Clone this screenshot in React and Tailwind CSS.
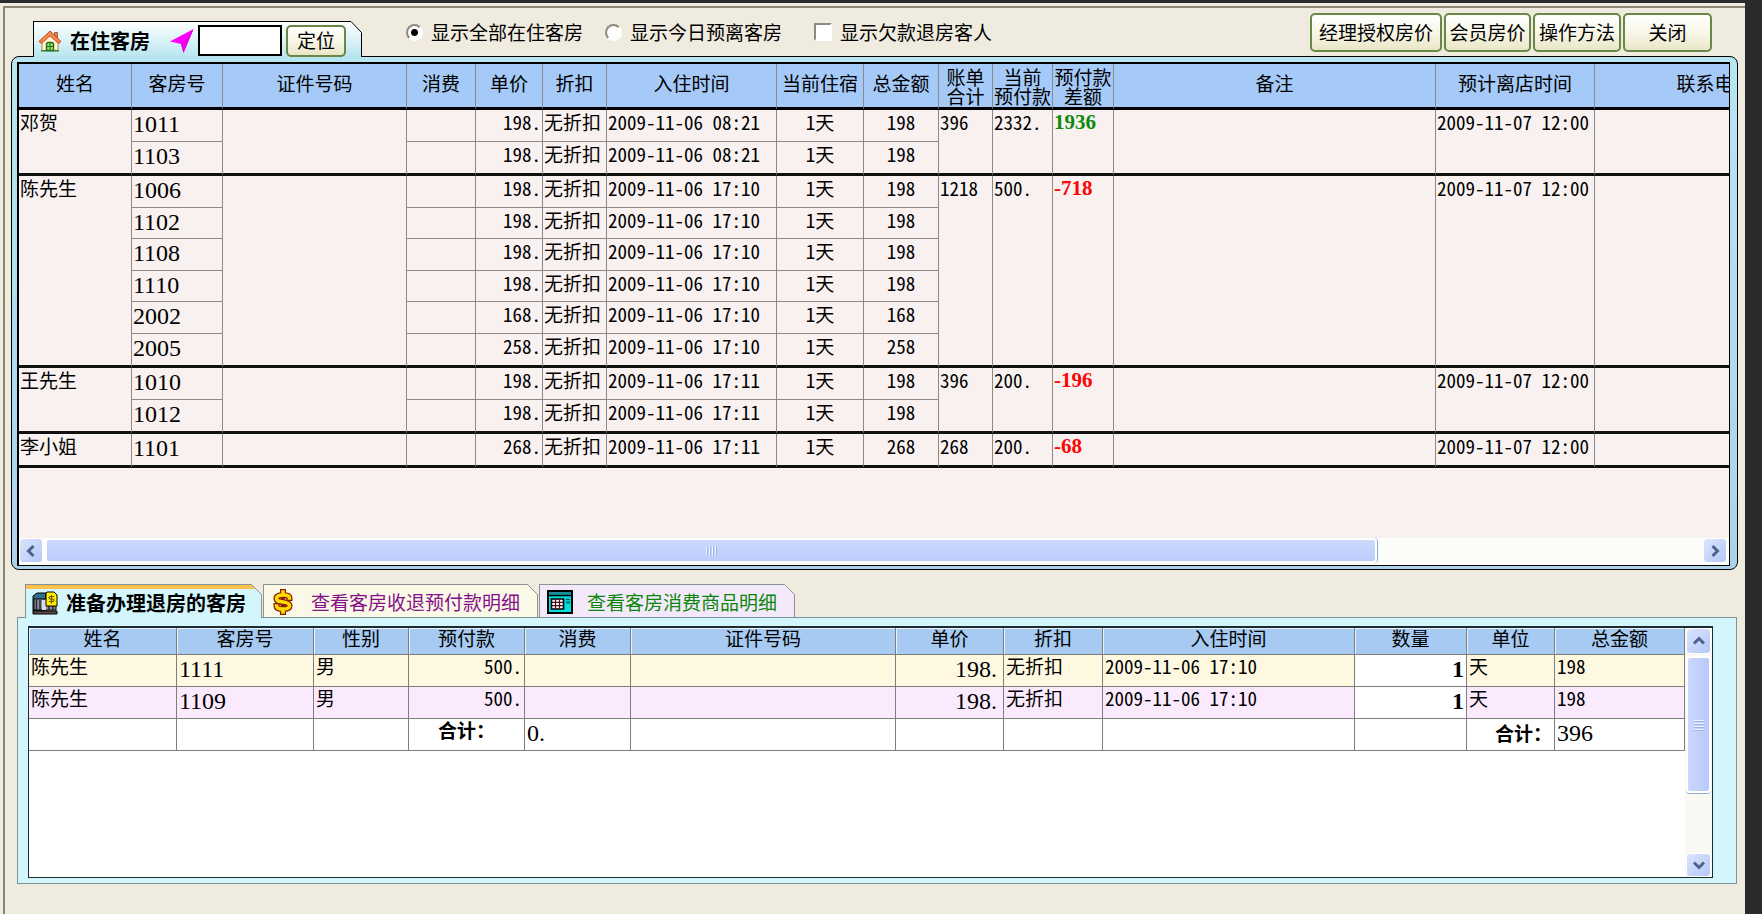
import { useState } from 'react'

const guests = [
  {
    name: '邓贺', bill: '396', paid: '2332.', diff: '1936', leave: '2009-11-07 12:00',
    rooms: [
      { no: '1011', price: '198.', time: '2009-11-06 08:21', total: '198' },
      { no: '1103', price: '198.', time: '2009-11-06 08:21', total: '198' },
    ],
  },
  {
    name: '陈先生', bill: '1218', paid: '500.', diff: '-718', leave: '2009-11-07 12:00',
    rooms: [
      { no: '1006', price: '198.', time: '2009-11-06 17:10', total: '198' },
      { no: '1102', price: '198.', time: '2009-11-06 17:10', total: '198' },
      { no: '1108', price: '198.', time: '2009-11-06 17:10', total: '198' },
      { no: '1110', price: '198.', time: '2009-11-06 17:10', total: '198' },
      { no: '2002', price: '168.', time: '2009-11-06 17:10', total: '168' },
      { no: '2005', price: '258.', time: '2009-11-06 17:10', total: '258' },
    ],
  },
  {
    name: '王先生', bill: '396', paid: '200.', diff: '-196', leave: '2009-11-07 12:00',
    rooms: [
      { no: '1010', price: '198.', time: '2009-11-06 17:11', total: '198' },
      { no: '1012', price: '198.', time: '2009-11-06 17:11', total: '198' },
    ],
  },
  {
    name: '李小姐', bill: '268', paid: '200.', diff: '-68', leave: '2009-11-07 12:00',
    rooms: [
      { no: '1101', price: '268.', time: '2009-11-06 17:11', total: '268' },
    ],
  },
]

const guestCols = [
  ['姓名', 'w-[113px]'],
  ['客房号', 'w-[91px]'],
  ['证件号码', 'w-[184px]'],
  ['消费', 'w-[69px]'],
  ['单价', 'w-[67px]'],
  ['折扣', 'w-[64px]'],
  ['入住时间', 'w-[170px]'],
  ['当前住宿', 'w-[87px]'],
  ['总金额', 'w-[75px]'],
  ['账单\n合计', 'w-[54px]'],
  ['当前\n预付款', 'w-[60px]'],
  ['预付款\n差额', 'w-[61px]'],
  ['备注', 'w-[322px]'],
  ['预计离店时间', 'w-[159px]'],
  ['联系电话', 'w-[240px]'],
]

const checkoutCols = [
  ['姓名', 'w-[148px]'],
  ['客房号', 'w-[137px]'],
  ['性别', 'w-[95px]'],
  ['预付款', 'w-[116px]'],
  ['消费', 'w-[106px]'],
  ['证件号码', 'w-[265px]'],
  ['单价', 'w-[108px]'],
  ['折扣', 'w-[99px]'],
  ['入住时间', 'w-[252px]'],
  ['数量', 'w-[112px]'],
  ['单位', 'w-[88px]'],
  ['总金额', 'w-[130px]'],
]

const checkoutRows = [
  { name: '陈先生', no: '1111', sex: '男', paid: '500.', price: '198.', off: '无折扣', time: '2009-11-06 17:10', qty: '1', unit: '天', total: '198', bg: 'bg-[#fef8e0]' },
  { name: '陈先生', no: '1109', sex: '男', paid: '500.', price: '198.', off: '无折扣', time: '2009-11-06 17:10', qty: '1', unit: '天', total: '198', bg: 'bg-[#fbeafd]' },
]

const bigNum = "font-['Liberation_Serif','Noto_Sans_CJK_SC',serif] text-2xl leading-[26px]"

/* ── ICONS ── */
function HouseIcon() {
  return (
    <svg viewBox="0 0 24 22" className="w-6 h-[22px] shrink-0">
      <path d="M4 11v9.5h16V11l-8-7z" fill="#fff3d8" stroke="#b8874c" />
      <path d="M16.5 2.5h3v5h-3z" fill="#d98a4c" stroke="#9c4a20" strokeWidth=".8" />
      <path d="M12 1 1 11.5l2.5 2L12 5.8l8.500 7.700 2.500-2z" fill="#f58a4b" stroke="#c2401c" strokeWidth="1" />
      <path d="M8.500 20.500v-6q0-2 2-2h3q2 0 2 2v6z" fill="#9be36a" stroke="#1f6b1a" strokeWidth="1.400" />
      <path d="M12 13v7M9 16.500h6" stroke="#1f6b1a" />
      <path d="M3 20.800h18" stroke="#2f7a2a" strokeWidth="1.400" />
    </svg>
  )
}

function PlaneIcon() {
  return (
    <svg viewBox="0 0 24 24" className="size-6 shrink-0">
      <path d="M23.500 0 0 12.500l11 2.500L13.500 24z" fill="#ff00ff" />
      <path d="M23.500 0 11 15 13.500 24z" fill="#e800ee" />
    </svg>
  )
}

function BuildingIcon() {
  return (
    <svg viewBox="0 0 26 24" className="w-[26px] h-6 shrink-0">
      <path d="M1 5 5 2h9v18H1z" fill="#2f6f88" stroke="#000" />
      <path d="M2 8h22v11H2z" fill="#8d8fa0" stroke="#000" />
      <path d="M4.500 9v10M8 9v10M17 14v5M21 14v5" stroke="#23242c" strokeWidth="1.400" />
      <path d="M10 9h4v10h-4z" fill="#d9dbe8" />
      <path d="M1 20h24v3H1z" fill="#5c4a48" stroke="#000" />
      <path d="M15 1h7l3 3v11H14V2z" fill="#ffee00" stroke="#000" />
      <path d="M22 5.500h-3.500q-1.500 0-1.500 1.200T18.500 8h2q1.500 0 1.500 1.300t-1.500 1.200H17M19.500 4v8.500" fill="none" stroke="#6b5a00" strokeWidth="1.200" />
    </svg>
  )
}

function DollarIcon() {
  const s = 'M17.500 9C17.500 7 15 6 11 6S4.500 7 4.500 9.500s2.500 3 6.500 3.500 6.500 1.200 6.500 3.700S15 20 11 20s-6.500-1-6.500-3M11 3v3M11 20v3'
  return (
    <svg viewBox="0 0 22 26" className="w-[22px] h-[26px] shrink-0">
      <path d={s} fill="none" stroke="#8a1c00" strokeWidth="6" strokeLinecap="square" />
      <path d={s} fill="none" stroke="#ffdc00" strokeWidth="3.600" strokeLinecap="square" />
      <path d="M9 9.500h4M9 16.500h4" stroke="#8a1c00" strokeWidth="1.600" />
    </svg>
  )
}

function SheetIcon() {
  return (
    <svg viewBox="0 0 26 24" className="w-[26px] h-6 shrink-0">
      <path d="M1 1h24v22H1z" fill="#00e0e0" stroke="#000" strokeWidth="2" />
      <path d="M2 2h22v2.500H2z" fill="#1c8f96" />
      <path d="M1 5.500h24" stroke="#000" strokeWidth="1.600" />
      <path d="M4.500 9h12v10h-12z" fill="#fff" stroke="#000" strokeWidth="1.600" />
      <path d="M4.500 12.300h12M4.500 15.600h12M8.500 9v10M12.500 9v10" stroke="#4a1020" strokeWidth="1.300" />
      <path d="M19 9.500h4M19 12.500h4" stroke="#00525a" strokeWidth="1.500" />
    </svg>
  )
}

function Arrow({ d }) {
  return (
    <svg viewBox="0 0 14 14" className="size-3.5">
      <path d={d} fill="none" stroke="#4b6290" strokeWidth="3" />
    </svg>
  )
}

function TabEdge({ fill, stroke, accent }) {
  return (
    <svg viewBox="0 0 12 36" preserveAspectRatio="xMinYMin slice" className="w-3 shrink-0 self-stretch">
      <path d="M0 .5h1.500l10 10V40H0z" fill={fill} />
      {accent && <path d="M0 1h1.500l4 4H0z" fill={accent} />}
      <path d="M0 .5h1.500l10 10V40" fill="none" stroke={stroke} />
    </svg>
  )
}

function ScrollButton({ label, d, className }) {
  return (
    <button aria-label={label} className={`flex items-center justify-center rounded-sm border border-white bg-gradient-to-br from-[#dbe4fd] to-[#b4c8f6] ${className}`}>
      <Arrow d={d} />
    </button>
  )
}

function PushButton({ className, children }) {
  return (
    <button className={`shrink-0 rounded-[5px] border-2 border-[#6b8748] bg-gradient-to-b from-white via-[#f8f7e8] to-[#e9e6c6] pb-0.5 leading-5 whitespace-nowrap ${className}`}>
      {children}
    </button>
  )
}

const radioCls = 'appearance-none size-[17px] shrink-0 rounded-full border-2 border-t-[#8d8b80] border-l-[#8d8b80] border-r-white border-b-white bg-white checked:bg-[radial-gradient(circle,#000_0_3px,#fff_4px)]'

/* ── IN-HOUSE GUESTS ── */
function GuestTable() {
  const cell = 'border-r border-[#8c8989] align-top pt-px px-px'
  return (
    <table className="table-fixed border-separate border-spacing-0 w-[1816px] leading-[22px] whitespace-nowrap">
      <thead>
        <tr className="h-[46px] bg-[#a5caf7]">
          {guestCols.map(([title, w]) => (
            <th key={title} className={`${w} ${title.includes('\n') ? 'pb-0' : 'pb-1.5'} border-r border-r-[#8c8989] border-b-3 border-b-black pt-0 px-0 text-center align-middle font-normal leading-[19px] whitespace-pre-line`}>
              {title}
            </th>
          ))}
        </tr>
      </thead>
      {guests.map(g => (
        <tbody key={g.name}>
          {g.rooms.map((r, i) => {
            const last = i === g.rooms.length - 1
            const line = last ? 'border-b-3 border-b-[#111]' : 'border-b'
            const h = last ? 'h-[34px]' : i % 2 ? 'h-[31px]' : 'h-8'
            const span = `${cell} border-b-3 border-b-[#111]`
            const n = g.rooms.length
            return (
              <tr key={r.no} className={h}>
                {i === 0 && <td rowSpan={n} className={span}>{g.name}</td>}
                <td className={`${cell} ${line} ${bigNum}`}>{r.no}</td>
                {i === 0 && <td rowSpan={n} className={span} />}
                <td className={`${cell} ${line}`} />
                <td className={`${cell} ${line} text-right`}>{r.price}</td>
                <td className={`${cell} ${line}`}>无折扣</td>
                <td className={`${cell} ${line}`}>{r.time}</td>
                <td className={`${cell} ${line} text-center`}>1天</td>
                <td className={`${cell} ${line} text-center`}>{r.total}</td>
                {i === 0 && (
                  <>
                    <td rowSpan={n} className={span}>{g.bill}</td>
                    <td rowSpan={n} className={span}>{g.paid}</td>
                    <td rowSpan={n} className={`${span} font-['Liberation_Serif',serif] text-[21px] font-bold ${g.diff.startsWith('-') ? 'text-[#fb0505]' : 'text-[#0c8a0c]'}`}>
                      {g.diff}
                    </td>
                    <td rowSpan={n} className={span} />
                    <td rowSpan={n} className={span}>{g.leave}</td>
                    <td rowSpan={n} className={span} />
                  </>
                )}
              </tr>
            )
          })}
        </tbody>
      ))}
    </table>
  )
}

/* ── ROOMS TO CHECK OUT ── */
function CheckoutTable() {
  const cell = 'border-r border-b border-[#7e7e7e] align-top pt-px px-0.5'
  return (
    <table className="table-fixed border-separate border-spacing-0 w-full leading-5 whitespace-nowrap">
      <thead>
        <tr className="h-[27px] bg-[#a6caf1]">
          {checkoutCols.map(([title, w]) => (
            <th key={title} className={`${w} border-r border-b border-[#7e7e7e] shadow-[inset_1px_1px_0_#e8f2fc] p-0 text-center align-top font-normal`}>
              {title}
            </th>
          ))}
        </tr>
      </thead>
      <tbody>
        {checkoutRows.map(r => (
          <tr key={r.no} className={`h-8 ${r.bg}`}>
            <td className={cell}>{r.name}</td>
            <td className={`${cell} ${bigNum}`}>{r.no}</td>
            <td className={cell}>{r.sex}</td>
            <td className={`${cell} text-right`}>{r.paid}</td>
            <td className={cell} />
            <td className={cell} />
            <td className={`${cell} ${bigNum} pr-1.5 text-right`}>{r.price}</td>
            <td className={cell}>{r.off}</td>
            <td className={cell}>{r.time}</td>
            <td className={`${cell} ${bigNum} bg-white text-right font-bold`}>{r.qty}</td>
            <td className={cell}>{r.unit}</td>
            <td className={cell}>{r.total}</td>
          </tr>
        ))}
      </tbody>
      <tfoot>
        <tr className="h-8 bg-white">
          <td className={cell} />
          <td className={cell} />
          <td className={cell} />
          <td className={`${cell} text-center font-bold`}>合计：</td>
          <td className={`${cell} ${bigNum}`}>0.</td>
          <td className={cell} />
          <td className={cell} />
          <td className={cell} />
          <td className={cell} />
          <td className={cell} />
          <td className={`${cell} text-right leading-[26px] font-bold`}>合计：</td>
          <td className={`${cell} ${bigNum}`}>396</td>
        </tr>
      </tfoot>
    </table>
  )
}

export default function App() {
  const [filter, setFilter] = useState('all')

  return (
    <div className="min-h-screen flex flex-col bg-[#2b2b2b] pt-[3px] pr-[17px] overflow-hidden font-['Noto_Sans_Mono_CJK_SC','Noto_Sans_CJK_SC',sans-serif] text-[19px] leading-5 text-black">
      <div className="flex-1 flex flex-col bg-[#efebde] pt-[3px] pl-[3px]">
        <main className="flex-1 border-t-2 border-l-2 border-[#8a8676] pl-1.5 pr-[7px]">

          {/* ── TOOLBAR ── */}
          <div className="flex items-end h-12">
            <div className="flex ml-[22px] h-9 -mb-px relative z-10">
              <div className="flex items-center border-t border-l border-black bg-gradient-to-b from-white to-[#b8e6f0] pt-0.5 pl-1">
                <HouseIcon />
                <h1 className="ml-2 text-xl leading-5 font-bold">在住客房</h1>
                <span className="ml-5"><PlaneIcon /></span>
                <input aria-label="客房定位" className="ml-1 h-[31px] w-[84px] border-2 border-black bg-white px-1" />
                <PushButton className="ml-1 h-8 w-[60px]">定位</PushButton>
              </div>
              <svg viewBox="0 0 16 36" className="w-4 h-9 shrink-0">
                <defs>
                  <linearGradient id="tab" x1="0" y1="0" x2="0" y2="1">
                    <stop offset="0" stopColor="#fff" />
                    <stop offset="1" stopColor="#b8e6f0" />
                  </linearGradient>
                </defs>
                <path d="M0 .5h5l10.500 11V36H0z" fill="url(#tab)" />
                <path d="M0 .5h5l10.500 11V36" fill="none" stroke="#000" />
              </svg>
            </div>

            <div className="flex items-center self-start pt-3.5 ml-11">
              <label className="flex items-center gap-2">
                <input type="radio" name="filter" className={radioCls} checked={filter === 'all'} onChange={() => setFilter('all')} />
                显示全部在住客房
              </label>
              <label className="flex items-center gap-2 ml-[22px]">
                <input type="radio" name="filter" className={radioCls} checked={filter === 'today'} onChange={() => setFilter('today')} />
                显示今日预离客房
              </label>
              <label className="flex items-center gap-2 ml-8">
                <input type="checkbox" className="appearance-none size-[18px] border-2 border-t-[#8d8b80] border-l-[#8d8b80] border-r-white border-b-white bg-white checked:bg-[#8d8b80]" />
                显示欠款退房客人
              </label>
            </div>

            <div className="flex gap-0.5 ml-auto mr-[26px] self-start pt-[5px]">
              <PushButton className="h-[39px] w-[132px]">经理授权房价</PushButton>
              <PushButton className="h-[39px] w-[87px]">会员房价</PushButton>
              <PushButton className="h-[39px] w-[88px]">操作方法</PushButton>
              <PushButton className="h-[39px] w-[89px]">关闭</PushButton>
            </div>
          </div>

          {/* ── IN-HOUSE PANEL ── */}
          <section className="rounded-lg border border-black bg-gradient-to-b from-[#b8e6f0] to-[#acd2ea] pt-[5px] pl-[5px] pr-[7px] pb-[3px]">
            <div className="border-t-2 border-l-2 border-r border-b border-black bg-[#f9f1f0] overflow-hidden">
              <div className="min-h-[473px]">
                <GuestTable />
              </div>
              <div className="flex h-7 border-t border-[#f4f0ec] bg-[#fcfcf8] pr-0.5 pb-0.5">
                <ScrollButton label="向左滚动" d="M9.500 2 4.500 7l5 5" className="w-6" />
                <div className="flex items-center justify-center gap-0.5 w-[78%] ml-0.5 rounded-sm border-2 border-white bg-gradient-to-b from-[#cbd8fd] to-[#bccdfb] shadow-[1px_0_0_#8ea9de]">
                  {[0, 1, 2, 3].map(i => <span key={i} className="w-px h-2.5 bg-[#eef3ff] shadow-[1px_0_0_#9db4ec]" />)}
                </div>
                <ScrollButton label="向右滚动" d="M4.500 2l5 5-5 5" className="w-6 ml-auto" />
              </div>
            </div>
          </section>

          {/* ── CHECKOUT TABS ── */}
          <div className="flex mt-3.5 ml-3.5 h-[34px] -mb-px relative z-10">
            <button className="flex h-full">
              <span className="flex items-center h-full border-t border-l border-[#8a9296] bg-[#d3f5fc] shadow-[inset_0_4px_0_#fbc04d] pl-1.5 pr-1 pt-0.5 gap-2 text-xl leading-5 font-bold">
                <BuildingIcon />准备办理退房的客房
              </span>
              <TabEdge fill="#d3f5fc" stroke="#8a9296" accent="#fbc04d" />
            </button>
            <button className="flex h-[33px] ml-px text-[#86108a]">
              <span className="flex items-center h-full border-t border-l border-[#8a9296] bg-[#faf8e6] pl-2 pr-1.5 pt-0.5 gap-[17px]">
                <DollarIcon />查看客房收退预付款明细
              </span>
              <TabEdge fill="#faf8e6" stroke="#8a9296" />
            </button>
            <button className="flex h-[33px] ml-px text-[#0a870a]">
              <span className="flex items-center h-full border-t border-l border-[#8a9296] bg-[#f4e9fb] pl-[7px] pr-1.5 pt-0.5 gap-3.5">
                <SheetIcon />查看客房消费商品明细
              </span>
              <TabEdge fill="#f4e9fb" stroke="#8a9296" />
            </button>
          </div>

          <section className="ml-1.5 mr-px mb-[30px] border border-[#7f9299] bg-[#d3f5fc] pt-2 pl-2.5 pr-[23px] pb-[5px]">
            <div className="flex border border-t-2 border-[#1d2a30] bg-white min-h-[252px]">
              <div className="flex-1 min-w-0">
                <CheckoutTable />
              </div>
              <div className="flex flex-col w-[27px] pl-px pr-px bg-[#f9f8f2]">
                <ScrollButton label="向上滚动" d="M2 9.500l5-5 5 5" className="h-[26px]" />
                <div className="flex flex-col items-center justify-center gap-0.5 h-[137px] mt-0.5 rounded-sm border-2 border-white bg-gradient-to-r from-[#cbd8fd] to-[#b7c9f9] shadow-[0_1px_0_#8ea9de]">
                  {[0, 1, 2, 3].map(i => <span key={i} className="h-px w-2.5 bg-[#eef3ff] shadow-[0_1px_0_#9db4ec]" />)}
                </div>
                <ScrollButton label="向下滚动" d="M2 4.500l5 5 5-5" className="h-6 mt-auto" />
              </div>
            </div>
          </section>
        </main>
      </div>
    </div>
  )
}
